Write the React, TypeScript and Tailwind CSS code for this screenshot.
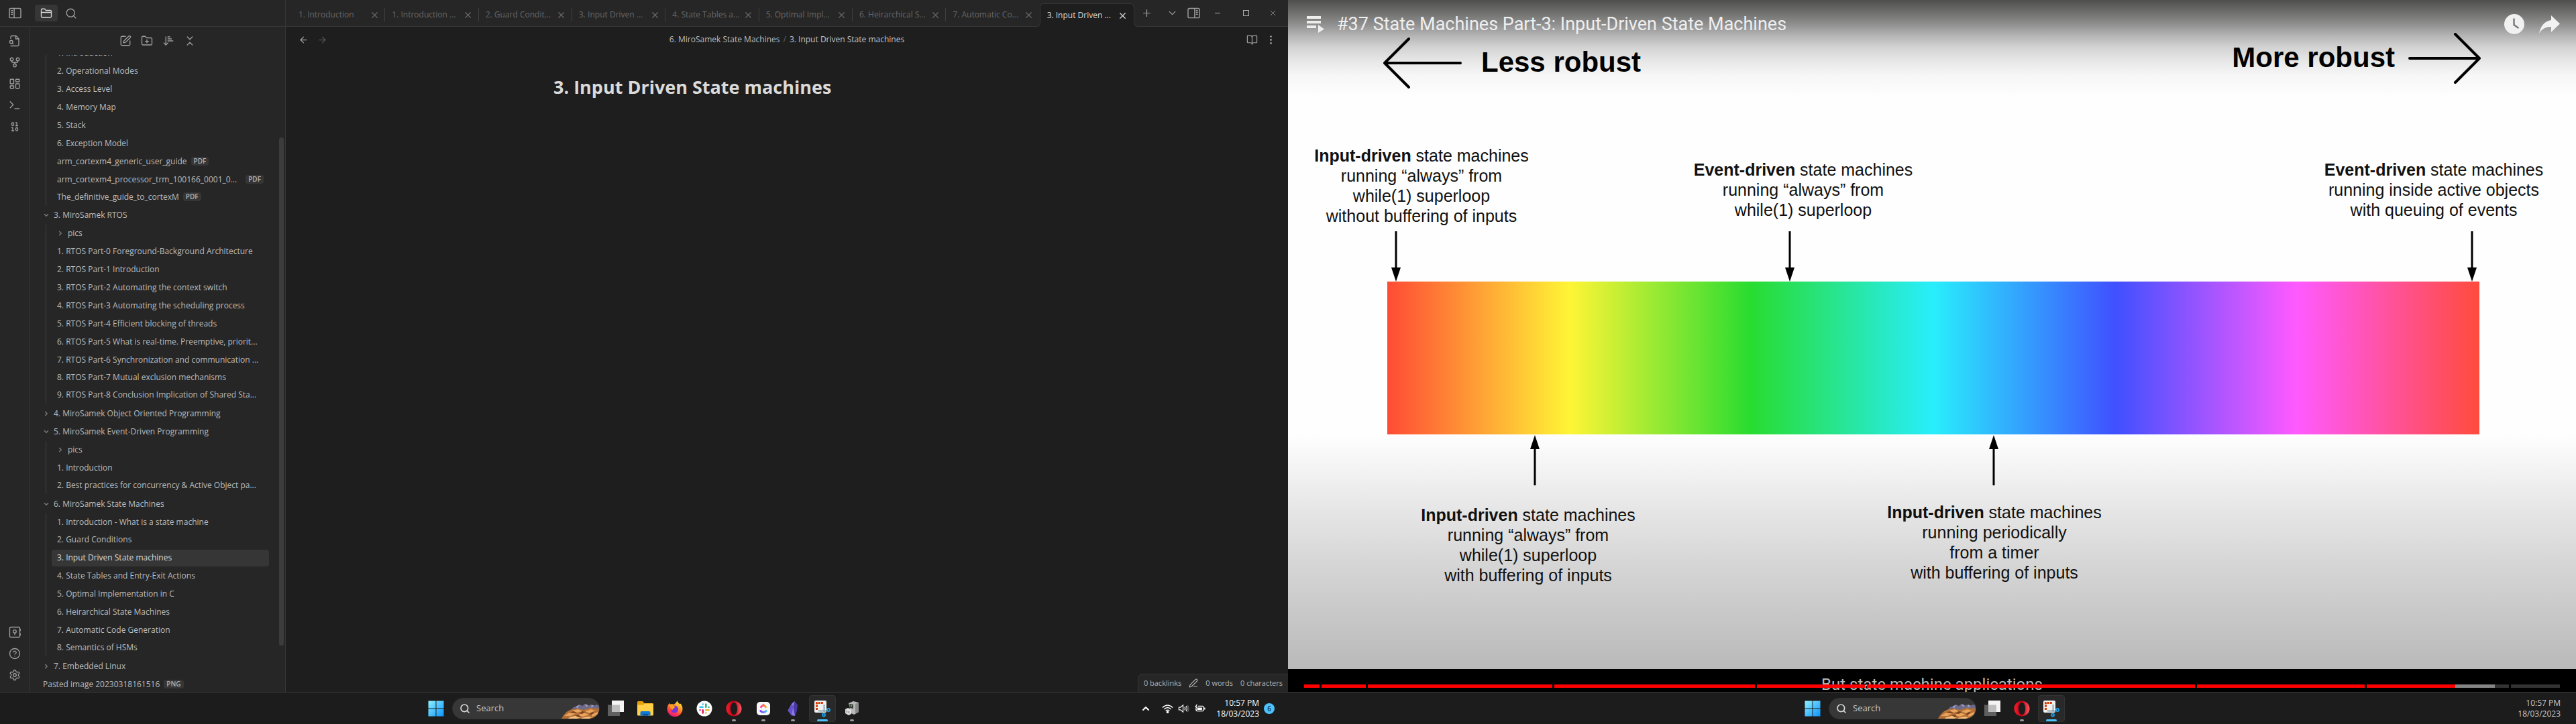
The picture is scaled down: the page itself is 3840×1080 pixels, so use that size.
import React from "react";
import {
  ArrowDownNarrowWide, ArrowLeft, ArrowRight, Binary, BookOpen, ChevronDown, ChevronRight, ChevronUp,
  ChevronsDownUp, EllipsisVertical, FolderClosed, FolderPlus, GitFork, HelpCircle, LayoutDashboard,
  PenLine, Plus, Search, Settings, SquarePen, X,
} from "lucide-react";

type Kind = "file" | "folder" | "subfolder" | "root";
type Node = { name: string; kind: Kind; open?: boolean; tag?: string; active?: boolean; wideTag?: boolean };

const f = (name: string, tag?: string): Node => ({ name, kind: "file", tag });

const tree: Node[] = [
  f("1. Introduction"),
  f("2. Operational Modes"),
  f("3. Access Level"),
  f("4. Memory Map"),
  f("5. Stack"),
  f("6. Exception Model"),
  f("arm_cortexm4_generic_user_guide", "PDF"),
  { ...f("arm_cortexm4_processor_trm_100166_0001_0...", "PDF"), wideTag: true },
  f("The_definitive_guide_to_cortexM", "PDF"),
  { name: "3. MiroSamek RTOS", kind: "folder", open: true },
  { name: "pics", kind: "subfolder" },
  f("1. RTOS Part-0 Foreground-Background Architecture"),
  f("2. RTOS Part-1 Introduction"),
  f("3. RTOS Part-2 Automating the context switch"),
  f("4. RTOS Part-3 Automating the scheduling process"),
  f("5. RTOS Part-4 Efficient blocking of threads"),
  f("6. RTOS Part-5 What is real-time. Preemptive, priorit..."),
  f("7. RTOS Part-6 Synchronization and communication ..."),
  f("8. RTOS Part-7 Mutual exclusion mechanisms"),
  f("9. RTOS Part-8 Conclusion Implication of Shared Sta..."),
  { name: "4. MiroSamek Object Oriented Programming", kind: "folder" },
  { name: "5. MiroSamek Event-Driven Programming", kind: "folder", open: true },
  { name: "pics", kind: "subfolder" },
  f("1. Introduction"),
  f("2. Best practices for concurrency & Active Object pa..."),
  { name: "6. MiroSamek State Machines", kind: "folder", open: true },
  f("1. Introduction - What is a state machine"),
  f("2. Guard Conditions"),
  { ...f("3. Input Driven State machines"), active: true },
  f("4. State Tables and Entry-Exit Actions"),
  f("5. Optimal Implementation in C"),
  f("6. Heirarchical State Machines"),
  f("7. Automatic Code Generation"),
  f("8. Semantics of HSMs"),
  { name: "7. Embedded Linux", kind: "folder" },
  { name: "Pasted image 20230318161516", kind: "root", tag: "PNG" },
];

const tabs = [
  "1. Introduction", "1. Introduction ...", "2. Guard Condit...", "3. Input Driven ...", "4. State Tables a...",
  "5. Optimal Impl...", "6. Heirarchical S...", "7. Automatic Co...", "3. Input Driven ...",
];

function PanelIcon({ right = false }: { right?: boolean }) {
  return (
    <svg viewBox="0 0 20 18" className={right ? "h-[17px] w-[19px] -scale-x-100" : "h-[17px] w-[19px]"} fill="none" stroke="currentColor" strokeWidth="1.5">
      <rect x="1" y="1.5" width="18" height="15" rx="2" />
      <path d="M8.5 1.5v15M3.5 5h3M3.5 8h3M3.5 11h3" />
    </svg>
  );
}

function FileSearchIcon() {
  return (
    <svg viewBox="0 0 24 24" className="size-[18px]" fill="none" stroke="currentColor" strokeWidth="1.75" strokeLinecap="round" strokeLinejoin="round">
      <path d="M4 22h14a2 2 0 0 0 2-2V7.5L14.5 2H6a2 2 0 0 0-2 2v3" />
      <path d="M14 2v6h6M9 18l-1.5-1.5" />
      <circle cx="5" cy="14" r="3" />
    </svg>
  );
}

function TerminalIcon() {
  return (
    <svg viewBox="0 0 24 24" className="size-[18px]" fill="none" stroke="currentColor" strokeWidth="1.75" strokeLinecap="round" strokeLinejoin="round">
      <path d="m3 17 6-6-6-6M12 19h9" />
    </svg>
  );
}

function VaultIcon() {
  return (
    <svg viewBox="0 0 24 24" className="size-[18px]" fill="none" stroke="currentColor" strokeWidth="1.75" strokeLinecap="round" strokeLinejoin="round">
      <rect x="2" y="2" width="20" height="20" rx="2" />
      <circle cx="12" cy="10.5" r="3" />
      <path d="M12 13.5V17M23 6v3M23 15v3" />
    </svg>
  );
}

function IconButton({ label, className, children }: { label: string; className: string; children: React.ReactNode }) {
  return (
    <button type="button" aria-label={label} className={`flex items-center justify-center ${className}`}>
      {children}
    </button>
  );
}

function Tag({ children }: { children: React.ReactNode }) {
  return <span className="shrink-0 rounded bg-[#363636] px-1 text-[10px] leading-[13px] font-semibold text-[#b3b3b3]">{children}</span>;
}

function TreeRow({ node, last }: { node: Node; last: boolean }) {
  const chevron = node.open ? <ChevronDown className="size-[10px] shrink-0 text-[#777]" strokeWidth={4} /> : <ChevronRight className="size-[10px] shrink-0 text-[#777]" strokeWidth={4} />;
  if (node.kind === "folder")
    return (
      <li className="flex min-h-0 items-center pl-5">
        <button type="button" className="flex items-center gap-[6px]">{chevron}{node.name}</button>
      </li>
    );
  if (node.kind === "root")
    return (
      <li className="flex min-h-0 items-center pl-5">
        <button type="button" className="flex items-center gap-[6px]">{node.name}<Tag>{node.tag}</Tag></button>
      </li>
    );
  return (
    <li className={`mr-6 ml-6 flex min-h-0 items-center border-l border-[#3f3f3f] pl-2 ${last ? "mb-[2px]" : ""}`}>
      <button
        type="button"
        className={`flex h-[25px] w-full items-center rounded px-2 ${node.wideTag ? "justify-between" : "gap-[6px]"} ${node.active ? "bg-[#363636] text-[#dadada]" : ""}`}
      >
        {node.kind === "subfolder" && chevron}
        <span>{node.name}</span>
        {node.tag && <Tag>{node.tag}</Tag>}
      </button>
    </li>
  );
}

function Sidebar() {
  return (
    <aside className="relative flex w-[382px] shrink-0 flex-col border-r border-[#363636] bg-[#262626] text-[#bcbcbc]">
      <div className="flex h-[42px] shrink-0 items-center justify-center text-[#a0a0a0]">
        <IconButton label="New note" className="w-8"><SquarePen className="size-[18px]" strokeWidth={1.75} /></IconButton>
        <IconButton label="New folder" className="w-8"><FolderPlus className="size-[18px]" strokeWidth={1.75} /></IconButton>
        <IconButton label="Change sort order" className="w-8"><ArrowDownNarrowWide className="size-[18px]" strokeWidth={1.75} /></IconButton>
        <IconButton label="Collapse all" className="w-8"><ChevronsDownUp className="size-[18px]" strokeWidth={1.75} /></IconButton>
      </div>
      <nav aria-label="Files" className="flex min-h-0 flex-1 flex-col overflow-hidden">
        <ul className="-mt-4 -mb-0.5 grid min-h-0 flex-1 auto-rows-fr text-[12px] leading-4 whitespace-nowrap">
          {tree.map((node, i) => (
            <TreeRow key={i} node={node} last={tree[i + 1]?.kind === "folder"} />
          ))}
        </ul>
      </nav>
      <div className="absolute top-[165px] right-[2px] bottom-[69px] w-[7px] rounded bg-[#3c3c3c]" />
    </aside>
  );
}

function Ribbon() {
  return (
    <div className="flex w-11 shrink-0 flex-col items-center border-r border-[#363636] bg-[#262626] pt-[5px] pb-[9px] text-[#a0a0a0]">
      <IconButton label="Open quick switcher" className="h-8 w-8"><FileSearchIcon /></IconButton>
      <IconButton label="Open graph view" className="h-8 w-8"><GitFork className="size-[18px]" strokeWidth={1.75} /></IconButton>
      <IconButton label="Create new canvas" className="h-8 w-8"><LayoutDashboard className="size-[18px]" strokeWidth={1.75} /></IconButton>
      <IconButton label="Open command palette" className="h-8 w-8"><TerminalIcon /></IconButton>
      <IconButton label="Templates" className="h-8 w-8"><Binary className="size-[18px]" strokeWidth={1.75} /></IconButton>
      <div className="flex-1" />
      <IconButton label="Open another vault" className="h-8 w-8"><VaultIcon /></IconButton>
      <IconButton label="Help" className="h-8 w-8"><HelpCircle className="size-[18px]" strokeWidth={1.75} /></IconButton>
      <IconButton label="Settings" className="h-8 w-8"><Settings className="size-[18px]" strokeWidth={1.75} /></IconButton>
    </div>
  );
}

function TitleBar() {
  return (
    <header className="flex h-10 shrink-0 border-b border-[#363636] bg-[#262626] text-[#a0a0a0]">
      <div className="flex w-[426px] shrink-0 items-center border-r border-[#363636]">
        <IconButton label="Toggle left sidebar" className="w-11"><PanelIcon /></IconButton>
        <IconButton label="Files" className="ml-2 h-[25px] w-[34px] rounded bg-[#363636] text-[#dadada]"><FolderClosed className="size-[18px]" strokeWidth={1.75} /></IconButton>
        <IconButton label="Search" className="ml-[3px] w-[34px]"><Search className="size-[18px]" strokeWidth={1.75} /></IconButton>
      </div>
      <div className="ml-[9px] flex min-w-0 flex-1 pt-[5px] text-[12px]">
        {tabs.map((t, i) => {
          const active = i === tabs.length - 1;
          return (
            <div
              key={i}
              className={`relative flex min-w-0 flex-1 items-center ${active ? "-mb-px rounded-t-[6px] border border-b-0 border-[#363636] bg-[#1e1e1e] text-[#dadada]" : "text-[#666]"}`}
            >
              {active && (
                <>
                  <span className="absolute bottom-0 -left-[7px] size-[7px] bg-[#1e1e1e]"><span className="block size-full rounded-br-[6px] border-r border-b border-[#363636] bg-[#262626]" /></span>
                  <span className="absolute -right-[7px] bottom-0 size-[7px] bg-[#1e1e1e]"><span className="block size-full rounded-bl-[6px] border-b border-l border-[#363636] bg-[#262626]" /></span>
                </>
              )}
              <button type="button" className="min-w-0 flex-1 overflow-hidden pl-[10px] text-left whitespace-nowrap">{t}</button>
              <IconButton label={`Close ${t}`} className="mr-2 w-4"><X className="size-[15px]" strokeWidth={2} /></IconButton>
              {i < tabs.length - 2 && <span className="absolute top-[7px] right-0 h-[20px] w-px bg-[#3f3f3f]" />}
            </div>
          );
        })}
      </div>
      <IconButton label="New tab" className="w-9"><Plus className="size-[17px]" strokeWidth={1.75} /></IconButton>
      <IconButton label="Tab list" className="w-10"><ChevronDown className="size-[17px]" strokeWidth={1.75} /></IconButton>
      <IconButton label="Toggle right sidebar" className="w-6"><PanelIcon right /></IconButton>
      <IconButton label="Minimize" className="w-12"><span className="h-px w-2 bg-[#b0b0b0]" /></IconButton>
      <IconButton label="Maximize" className="w-9"><span className="size-[9px] border border-[#b0b0b0]" /></IconButton>
      <IconButton label="Close" className="w-[45px]"><X className="size-[13px]" strokeWidth={1.5} /></IconButton>
    </header>
  );
}

function NotesApp() {
  return (
    <section className="flex min-h-0 flex-1 flex-col bg-[#1e1e1e]">
      <TitleBar />
      <div className="flex min-h-0 flex-1">
        <Ribbon />
        <Sidebar />
        <main className="relative flex min-w-0 flex-1 flex-col">
          <div className="flex h-[38px] items-center text-[12px]">
            <IconButton label="Back" className="ml-3 w-7 text-[#a0a0a0]"><ArrowLeft className="size-[15px]" /></IconButton>
            <IconButton label="Forward" className="w-7 text-[#555]"><ArrowRight className="size-[15px]" /></IconButton>
            <div className="flex flex-1 justify-center gap-[5px] text-[#bcbcbc]">
              <a href="#folder">6. MiroSamek State Machines</a>
              <span className="text-[#666]">/</span>
              <span className="text-[#c4c4c4]">3. Input Driven State machines</span>
            </div>
            <IconButton label="Reading view" className="w-7 text-[#a0a0a0]"><BookOpen className="size-[17px]" strokeWidth={1.75} /></IconButton>
            <IconButton label="More options" className="mr-3 w-7 text-[#a0a0a0]"><EllipsisVertical className="size-[17px]" /></IconButton>
          </div>
          <div className="mx-auto w-full max-w-[696px] pt-[34px]">
            <h1 className="text-[27px] leading-9 font-bold text-[#dadada]">3. Input Driven State machines</h1>
          </div>
          <footer className="absolute right-0 bottom-0 flex h-[27px] items-center rounded-tl-[8px] border-t border-l border-[#363636] bg-[#262626] px-2 text-[11px] text-[#b3b3b3]">
            <span>0 backlinks</span>
            <PenLine className="mx-[11px] size-[14px]" />
            <span>0 words</span>
            <span className="ml-[11px]">0 characters</span>
          </footer>
        </main>
      </div>
    </section>
  );
}

/* ---------- taskbar ---------- */

function WindowsLogo() {
  return (
    <svg viewBox="0 0 24 24" className="size-6">
      <defs>
        <linearGradient id="win" x1="0" y1="0" x2="1" y2="1">
          <stop offset="0" stopColor="#8ff0ff" />
          <stop offset="1" stopColor="#0a93ff" />
        </linearGradient>
      </defs>
      <path fill="url(#win)" d="M.5.5h11v11H.5zM12.500 .5h11v11h-11zM.5 12.500h11v11H.5zM12.500 12.500h11v11h-11z" />
    </svg>
  );
}

function Canyon() {
  return (
    <svg viewBox="0 0 56 30" className="h-[30px] w-[56px] shrink-0">
      <path fill="#6e6a8a" d="M14 17 19 12l4 1 4-4 4 2 4-3 4 3 5-2 4 2 4-2 4 1v14H14z" />
      <path fill="#9a9cc0" d="m21 12 3 3 3-6zM35 8l2 5 3-3zM45 9l-1 5 5-3z" />
      <path fill="#b57035" d="M0 30C4 23 9 17 17 16l8-1 8 2 8-3 15 1v12q-2 3-6 3z" />
      <path fill="#e8a45c" d="m4 26 8-5 9 1-7 4zM16 18l9-2 6 3-8 2zM24 25l9-4 8 3-9 3zM35 19l9-3 6 2-8 4zM44 24l10-4v4l-8 3z" />
      <path fill="#f6c07e" d="m12 28 9-2 7 2-4 2H10zM30 29l9-2 6 1-3 2H30z" />
      <path fill="#7d4524" d="m12 21 6-2 5 2-4 1zM31 19l5 1-5 3-5-1zM41 23l5-3 3 1-5 4zM20 25l5-1 4 3-4 1z" />
    </svg>
  );
}

function TaskViewIcon() {
  return (
    <svg viewBox="0 0 24 24" className="size-6">
      <path fill="#5f5f5f" d="M0 6.500h18V23H0z" />
      <path fill="#f4f4f4" d="M6 0h18v17H6z" />
      <path fill="#bdbdbd" d="M6 6.500h12V17H6z" />
    </svg>
  );
}

function ExplorerIcon() {
  return (
    <svg viewBox="0 0 24 24" className="size-6">
      <path fill="#e3a008" d="M0 2.500Q0 1 1.500 1H8l2.500 3H22.500Q24 4 24 5.500V12H0z" />
      <path fill="#ffcf48" d="M0 6.500h8.500L11 4.500h11.500q1.500 0 1.500 1.500v15q0 1.500-1.500 1.500h-21Q0 22.500 0 21z" />
      <path fill="#0f78d4" d="M4.500 22.500V18q0-2 2-2h11q2 0 2 2v4.500z" />
      <path fill="#0a4f99" d="M8 22.500V20h8v2.500z" />
    </svg>
  );
}

function FirefoxIcon() {
  return (
    <svg viewBox="0 0 24 24" className="size-6">
      <defs>
        <linearGradient id="ff" x1=".8" y1="0" x2=".3" y2="1">
          <stop offset="0" stopColor="#fff04a" />
          <stop offset=".4" stopColor="#ff9a1f" />
          <stop offset=".75" stopColor="#ff3b47" />
          <stop offset="1" stopColor="#e31587" />
        </linearGradient>
      </defs>
      <path fill="url(#ff)" d="M15.500 0c.5 2.500 2 3.500 3.500 5 .8.500 1.200-.2 1.500-.5 2 2.500 3 5 3 8A11.500 11.500 0 0 1 .5 12.500C.5 8.500 2 6 4 3.500c0 1 .3 1.700 1 2.200C7.500 5 9.500 5.500 10 6c2-1 4.500-3 5.500-6z" />
      <circle cx="11.500" cy="13" r="5.500" fill="#7a35d8" />
      <path fill="#ff9d22" d="M4.500 6c3-.5 5 .5 6.500 2.500 1 .2 1.500.8 1.500 1.500-.5 1-2.500 1-3 2 0 1-.5 2-2 2-1-2-3.500-4-3-8z" />
    </svg>
  );
}

function SlackIcon() {
  return (
    <svg viewBox="0 0 24 24" className="size-6">
      <circle cx="12" cy="12" r="11.500" fill="#fff" />
      <g strokeWidth="2.600" strokeLinecap="round">
        <path stroke="#36c5f0" d="M5.500 9.700h4.200M9.700 5.500h.01" />
        <path stroke="#2eb67d" d="M14.300 5.500v4.200M18.500 9.700h.01" />
        <path stroke="#ecb22e" d="M14.300 14.300h4.200M14.300 18.500h.01" />
        <path stroke="#e01e5a" d="M9.700 14.300v4.200M5.500 14.300h.01" />
      </g>
    </svg>
  );
}

function OperaIcon() {
  return (
    <svg viewBox="0 0 24 24" className="size-6">
      <defs>
        <linearGradient id="op" x1="0" y1="0" x2="1" y2="0">
          <stop offset="0" stopColor="#ff1b2d" />
          <stop offset=".5" stopColor="#b80012" />
          <stop offset="1" stopColor="#ff5a64" />
        </linearGradient>
      </defs>
      <path fill="url(#op)" fillRule="evenodd" d="M12 .5c6.300 0 11.500 5 11.500 11.500S18.300 23.500 12 23.500.5 18.500.5 12 5.700.5 12 .5zm0 2.500C8.800 3 6.800 7 6.800 12s2 9 5.200 9 5.200-4 5.200-9S15.200 3 12 3z" />
    </svg>
  );
}

function ClickUpIcon() {
  return (
    <svg viewBox="0 0 24 24" className="size-6" fill="none" strokeWidth="3">
      <defs>
        <linearGradient id="cu1"><stop offset="0" stopColor="#ff2fb4" /><stop offset="1" stopColor="#ffb000" /></linearGradient>
        <linearGradient id="cu2"><stop offset="0" stopColor="#8930fd" /><stop offset="1" stopColor="#49ccf9" /></linearGradient>
      </defs>
      <rect x="2" y="2" width="20" height="20" rx="5" fill="#f7f7f7" />
      <path stroke="url(#cu1)" d="m7.500 10.500 4.500-4 4.500 4" />
      <path stroke="url(#cu2)" d="M7 14.500q2 3 5 3t5-3" />
    </svg>
  );
}

function ObsidianIcon() {
  return (
    <svg viewBox="0 0 24 24" className="size-6">
      <path fill="#4a37a0" d="m14.500 1 4.500 5.500-1 9-3 7.500-5-1-5.500-7L10 5z" />
      <path fill="#8b7ae8" d="m14.500 1-2 8 2.500 14-5-1-5.500-7L10 5z" />
      <path fill="#6652c8" d="m10 5-5.500 10 5.500 7 2.500-13z" />
    </svg>
  );
}

function SnipIcon() {
  return (
    <svg viewBox="0 0 26 26" className="size-[26px]">
      <rect x="1" y="1" width="18" height="18" rx="2" fill="#f1f1f1" />
      <path fill="none" stroke="#d83b01" strokeWidth="3" strokeDasharray="3 1.200" d="M4.500 15V4.500H14" />
      <path stroke="#8fa3b0" strokeWidth="2" fill="none" d="M15.500 7v11M7 16.500h12" />
      <circle cx="15" cy="22.500" r="2" fill="none" stroke="#1ba1e8" strokeWidth="1.800" />
      <circle cx="22" cy="15" r="2" fill="none" stroke="#1ba1e8" strokeWidth="1.800" />
    </svg>
  );
}

function SerialIcon() {
  return (
    <svg viewBox="0 0 24 24" className="size-6">
      <path fill="#b8b8b8" d="m7 4 7-3 8 2v14l-7 4-4-2z" />
      <path fill="#8a8a8a" d="m17 5 5-2v14l-5 3z" />
      <path fill="#3a3a3a" d="m8.500 5 5.500 1v6l-5.500-1z" />
      <path fill="#35d04a" d="M10 7h2v2h-2z" />
      <path fill="#dedede" d="m2 13 4-2 5 2v7l-4 2-5-3z" />
      <path fill="#4c4c4c" d="M4 15h1v3H4zM7 16h1v3H7z" />
    </svg>
  );
}

type App = { name: string; icon: React.ReactNode; state?: "running" | "focused" };

const taskView: App = { name: "Task View", icon: <TaskViewIcon /> };
const opera: App = { name: "Opera", icon: <OperaIcon />, state: "running" };
const snip: App = { name: "Snipping Tool", icon: <SnipIcon />, state: "focused" };

const mainApps: App[] = [
  taskView,
  { name: "File Explorer", icon: <ExplorerIcon /> },
  { name: "Firefox", icon: <FirefoxIcon /> },
  { name: "Slack", icon: <SlackIcon /> },
  opera,
  { name: "ClickUp", icon: <ClickUpIcon />, state: "running" },
  { name: "Obsidian", icon: <ObsidianIcon />, state: "running" },
  snip,
  { name: "Serial terminal", icon: <SerialIcon />, state: "running" },
];

function Taskbar({ id, apps, children }: { id: string; apps: App[]; children: React.ReactNode }) {
  return (
    <div className="grid h-12 shrink-0 grid-cols-[1fr_auto_1fr] items-center border-t border-[#3c3c3c] bg-[#1c1c1c]">
      <div />
      <div className="flex items-center gap-1">
        <IconButton label="Start" className="size-10"><WindowsLogo /></IconButton>
        <div className="flex h-8 w-[220px] items-center overflow-hidden rounded-full border border-[#333] bg-[#373737] pl-[10px]">
          <Search className="size-4 shrink-0 text-[#d8d8d8]" strokeWidth={2.5} />
          <label htmlFor={id} className="sr-only">Search</label>
          <input id={id} placeholder="Search" className="min-w-0 flex-1 bg-transparent pl-[9px] text-[13px] placeholder-[#c8c8c8] outline-none" />
          <Canyon />
        </div>
        {apps.map((a) => (
          <IconButton key={a.name} label={a.name} className={`relative size-10 rounded ${a.state === "focused" ? "border border-[#333] bg-[#292929]" : ""}`}>
            {a.icon}
            {a.state === "running" && <span className="absolute bottom-[1px] h-[3px] w-[6px] rounded-full bg-[#9a9a9a]" />}
            {a.state === "focused" && <span className="absolute bottom-0 h-[3px] w-4 rounded-full bg-[#4cc2ff]" />}
          </IconButton>
        ))}
      </div>
      <div className="flex items-center justify-end">{children}</div>
    </div>
  );
}

function TrayIcons() {
  return (
    <div className="flex items-center text-white">
      <IconButton label="Show hidden icons" className="mr-4 w-4"><ChevronUp className="size-4" strokeWidth={3} /></IconButton>
      <button type="button" aria-label="Network, volume and battery" className="mr-4 flex items-center gap-[7px]">
        <svg viewBox="0 0 18 16" className="h-4 w-[17px]" fill="none" stroke="currentColor" strokeWidth="1.500">
          <path d="M1 6.500q8-7.500 16 0M3.500 9q5.500-5 11 0M6 11.500q3-2.500 6 0" />
          <circle cx="9" cy="13.500" r="1.200" fill="currentColor" />
        </svg>
        <svg viewBox="0 0 18 16" className="h-4 w-[17px]" fill="none" stroke="currentColor" strokeWidth="1.300">
          <path d="M1.500 6v4h2.500l4 3.500v-11L4 6zM10.500 5.500q1.800 2.500 0 5M12.800 4q3 4 0 8" />
          <path stroke="#666" d="M15 2.500q4 5.500 0 11" />
        </svg>
        <svg viewBox="0 0 18 16" className="h-4 w-[17px]" fill="currentColor">
          <path fillRule="evenodd" d="M6 3.500h7.500q2 0 2 2v5q0 2-2 2h-9q-2 0-2-2V8H4v2.500q0 .8.800.8h8.500q.8 0 .8-.8v-5q0-.8-.8-.8H6z" />
          <path d="M5 10V6.500h7.500V10zM16 6.500h1.500v3H16zM4 1 1 6h2L2 9.500 5.500 5h-2L5 1z" />
        </svg>
      </button>
    </div>
  );
}

function Clock({ className }: { className: string }) {
  return (
    <time dateTime="2023-03-18T22:57" className={`text-right text-[12px] leading-4 ${className}`}>
      10:57 PM
      <br />
      18/03/2023
    </time>
  );
}

/* ---------- video ---------- */

const SLIDE = 1920;
const pct = (x: number) => `${(x / SLIDE) * 100}%`;

type Note = { x: number; arrow: number; place: string; strong: string; lines: string[] };

const upper: Note[] = [
  { x: 199, arrow: 161, place: "top-[217px]", strong: "Input-driven", lines: ["running “always” from", "while(1) superloop", "without buffering of inputs"] },
  { x: 768, arrow: 748, place: "top-[238px]", strong: "Event-driven", lines: ["running “always” from", "while(1) superloop"] },
  { x: 1708, arrow: 1765, place: "top-[238px]", strong: "Event-driven", lines: ["running inside active objects", "with queuing of events"] },
];
const lower: Note[] = [
  { x: 358, arrow: 368, place: "top-[105px]", strong: "Input-driven", lines: ["running “always” from", "while(1) superloop", "with buffering of inputs"] },
  { x: 1053, arrow: 1052, place: "top-[101px]", strong: "Input-driven", lines: ["running periodically", "from a timer", "with buffering of inputs"] },
];

function Notes({ notes, down }: { notes: Note[]; down: boolean }) {
  return (
    <>
      {notes.map((n) => (
        <React.Fragment key={n.x}>
          <p className={`absolute -translate-x-1/2 text-center text-[25px] leading-[30px] whitespace-nowrap text-[#111] ${n.place}`} style={{ left: pct(n.x) }}>
            <strong>{n.strong}</strong> state machines
            {n.lines.map((l) => (
              <React.Fragment key={l}><br />{l}</React.Fragment>
            ))}
          </p>
          <svg viewBox="0 0 14 75" className={`absolute h-[75px] w-[14px] -translate-x-1/2 ${down ? "bottom-0" : "top-px rotate-180"}`} style={{ left: pct(n.arrow) }}>
            <path d="M7 0v60" stroke="#000" strokeWidth="3" />
            <path d="M0 54h14L7 75z" />
          </svg>
        </React.Fragment>
      ))}
    </>
  );
}

const chapters: { size: number; parts: [string, number][] }[] = [
  ...[23, 66, 275, 299, 161, 489, 250].map((size) => ({ size, parts: [["bg-[#ff0000]", 1]] as [string, number][] })),
  { size: 212, parts: [["bg-[#ff0000]", 132], ["bg-[#858585]", 59], ["bg-[#333333]", 21]] },
  { size: 73, parts: [["bg-[#333333]", 1]] },
];

function Video() {
  return (
    <section className="relative flex min-h-0 flex-1 flex-col bg-black font-['Liberation_Sans',Arial,sans-serif]">
      <div className="relative flex min-h-0 flex-1 flex-col bg-[#fefefe]">
        <div className="relative h-[420px] shrink-0 bg-[linear-gradient(to_bottom,#4f4f4d_0px,#6e6e6c_18px,#919191_37px,#b6b6b6_54px,#d2d2d2_70px,#e8e8e8_92px,#f6f6f6_112px,#fefefe_145px)]">
          <div className="absolute top-[56px] flex items-center gap-[29px]" style={{ left: pct(142) }}>
            <svg viewBox="0 0 117 76" className="h-[76px] w-[117px]" fill="none" stroke="#000" strokeWidth="4" strokeLinecap="round" strokeLinejoin="round">
              <path d="M38 2 2 38l36 36M2 38h113" />
            </svg>
            <span className="pb-[3px] text-[42px] leading-[48px] font-bold">Less robust</span>
          </div>
          <div className="absolute top-[49px] flex items-center gap-5" style={{ right: pct(142) }}>
            <span className="pb-[3px] text-[42px] leading-[48px] font-bold">More robust</span>
            <svg viewBox="0 0 108 76" className="h-[76px] w-[108px]" fill="none" stroke="#000" strokeWidth="4" strokeLinecap="round" strokeLinejoin="round">
              <path d="m70 2 36 36-36 36M106 38H2" />
            </svg>
          </div>
          <Notes notes={upper} down />
          <div className="absolute inset-x-0 top-0 flex h-[72px] items-center pr-6 pl-7 text-[#eeeeee]">
            <svg viewBox="0 0 27 26" className="h-[26px] w-[27px]" fill="currentColor">
              <path d="M0 1h21v4H0zM0 8h21v4H0zM0 15h14v4H0zM17 14l9 6.500-9 5.500z" />
            </svg>
            <h2 className="ml-[18px] flex-1 font-['Roboto',sans-serif] text-[27px] leading-8">#37 State Machines Part-3: Input-Driven State Machines</h2>
            <IconButton label="Watch later" className="mr-[22px]">
              <svg viewBox="0 0 30 30" className="size-[30px]" fill="none">
                <circle cx="15" cy="15" r="15" fill="#f1f1f1" />
                <path d="M14.500 6.500v9.500l7 5" stroke="#7c7c7c" strokeWidth="2.500" />
              </svg>
            </IconButton>
            <IconButton label="Share" className="">
              <svg viewBox="0 0 31 27" className="h-[27px] w-[31px]" fill="#f1f1f1">
                <path d="M18 0v7C6 9 2 18 0 27c4-7 10-10 18-10v8l13-12.500z" />
              </svg>
            </IconButton>
          </div>
        </div>
        <div className="mr-36 ml-[148px] h-[228px] shrink-0 bg-[linear-gradient(to_right,#ff4b35,#fff536_16.700%,#28dc30_33.300%,#28eefc_50%,#4050ff_66.700%,#ff5aff_83.300%,#ff4b3c)]" />
        <div className="relative min-h-0 flex-1 bg-[linear-gradient(to_bottom,#fefefe_0%,#f3f3f3_15%,#e6e6e6_32%,#d6d6d6_55%,#c6c6c6_80%,#b9b9b9_100%)]">
          <Notes notes={lower} down={false} />
        </div>
      </div>
      <div className="relative h-[34px] shrink-0 overflow-hidden">
        <p className="pt-[9px] text-center font-['Roboto',sans-serif] text-[24px] leading-7 text-[#b9b9b9]">But state machine applications</p>
        <div role="progressbar" aria-label="Playback position" aria-valuenow={92} className="absolute inset-x-6 top-[23px] flex h-[5px] gap-[3px]">
          {chapters.map((c, i) => (
            <div key={i} className="flex basis-0" style={{ flexGrow: c.size }}>
              {c.parts.map(([color, size], j) => (
                <div key={j} className={`basis-0 ${color}`} style={{ flexGrow: size }} />
              ))}
            </div>
          ))}
        </div>
      </div>
    </section>
  );
}

export default function App() {
  return (
    <div className="grid h-screen grid-cols-2 overflow-hidden bg-[#1c1c1c] font-['Open_Sans',sans-serif]">
      <div className="flex min-h-0 min-w-0 flex-col">
        <NotesApp />
        <Taskbar id="search-main" apps={mainApps}>
          <TrayIcons />
          <Clock className="mr-[7px] text-white" />
          <span className="mr-5 flex size-4 items-center justify-center rounded-full bg-[#4cc2ff] text-[10px] leading-4 text-black">6</span>
        </Taskbar>
      </div>
      <div className="flex min-h-0 min-w-0 flex-col">
        <Video />
        <Taskbar id="search-second" apps={[taskView, opera, snip]}>
          <Clock className="mr-[23px] text-[#c8c8c8]" />
        </Taskbar>
      </div>
    </div>
  );
}
